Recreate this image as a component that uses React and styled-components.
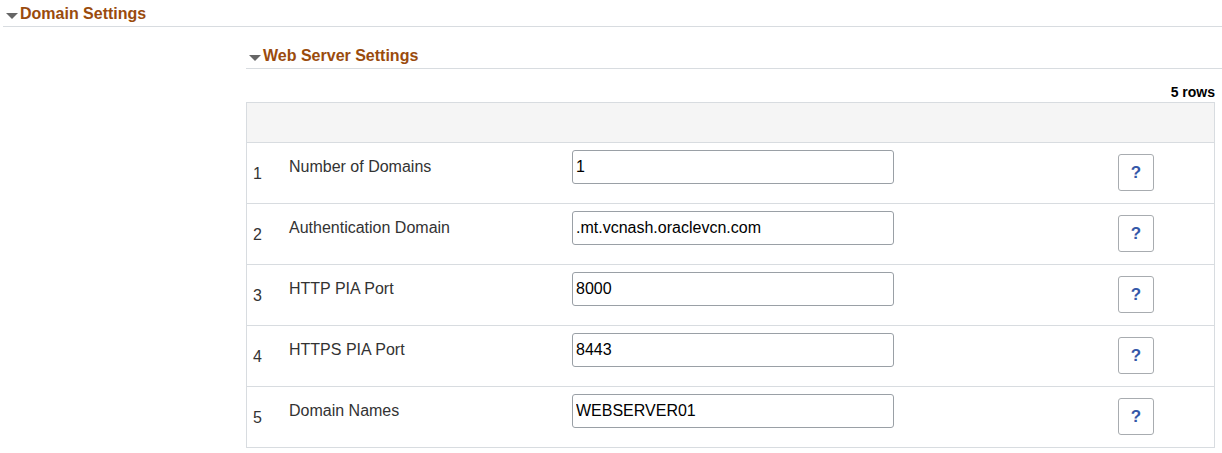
import React from 'react'
import styled, { createGlobalStyle } from 'styled-components'

const GlobalStyle = createGlobalStyle`
    body {
        margin: 0;
        background: #ffffff;
        font-family: "Liberation Sans", Arial, sans-serif;
        color: #333333;
    }
`

const Page = styled.div`
    padding-left: 3px;
    width: 1219px;
`

const Header = styled.div`
    display: flex;
    align-items: center;
    gap: 2px;
    padding: ${(props) => props.$top}px 0 3px 3px;
    border-bottom: 1px solid #d8dce0;
    font-size: 16px;
    line-height: 18px;
    font-weight: bold;
    color: #9a4b0d;
`

const Caret = styled.span`
    width: 0;
    height: 0;
    border-left: 6px solid transparent;
    border-right: 6px solid transparent;
    border-top: 6px solid #666666;
    margin-top: 3px;
`

const Section = styled.div`
    margin-left: 243px;
`

const RowCount = styled.div`
    width: 969px;
    margin-top: 15px;
    margin-bottom: 2px;
    text-align: right;
    font-size: 14px;
    line-height: 16px;
    font-weight: bold;
    color: #000000;
`

const Grid = styled.div`
    width: 967px;
    border: 1px solid #d8dce0;
`

const HeadRow = styled.div`
    height: 39px;
    background: #f5f5f5;
`

const Row = styled.div`
    display: grid;
    grid-template-columns: 41px 284px 322px 1fr 96px;
    height: 60px;
    border-top: 1px solid #d8dce0;
    font-size: 16px;
    line-height: 18px;
`

const Num = styled.div`
    padding: 22px 0 0 6px;
    color: #333333;
`

const Label = styled.div`
    padding: 15px 0 0 1px;
    color: #333333;
`

const InputCell = styled.div`
    padding-top: 7px;
`

const Field = styled.input`
    box-sizing: border-box;
    width: 322px;
    height: 34px;
    padding: 0 3px;
    border: 1px solid #9aa0a6;
    border-radius: 3px;
    font-family: "Liberation Sans", Arial, sans-serif;
    font-size: 16px;
    color: #000000;
    background: #ffffff;
    outline: none;
`

const HelpCell = styled.div`
    padding-top: 11px;
`

const HelpButton = styled.button`
    width: 36px;
    height: 37px;
    padding: 0;
    border: 1px solid #a8acb0;
    border-radius: 3px;
    background: #ffffff;
    color: #3558a8;
    font-family: "Liberation Sans", Arial, sans-serif;
    font-size: 17px;
    font-weight: bold;
    cursor: pointer;
`

const settings = [
    { label: 'Number of Domains', value: '1' },
    { label: 'Authentication Domain', value: '.mt.vcnash.oraclevcn.com' },
    { label: 'HTTP PIA Port', value: '8000' },
    { label: 'HTTPS PIA Port', value: '8443' },
    { label: 'Domain Names', value: 'WEBSERVER01' },
]

const App = () => {
    return (
        <Page>
            <GlobalStyle />
            <Header $top={5}>
                <Caret />
                Domain Settings
            </Header>
            <Section>
                <Header $top={20}>
                    <Caret />
                    Web Server Settings
                </Header>
                <RowCount>5 rows</RowCount>
                <Grid>
                    <HeadRow />
                    {settings.map((item, i) => (
                        <Row key={item.label}>
                            <Num>{i + 1}</Num>
                            <Label>{item.label}</Label>
                            <InputCell>
                                <Field defaultValue={item.value} />
                            </InputCell>
                            <div />
                            <HelpCell>
                                <HelpButton>?</HelpButton>
                            </HelpCell>
                        </Row>
                    ))}
                </Grid>
            </Section>
        </Page>
    )
}

export default App
